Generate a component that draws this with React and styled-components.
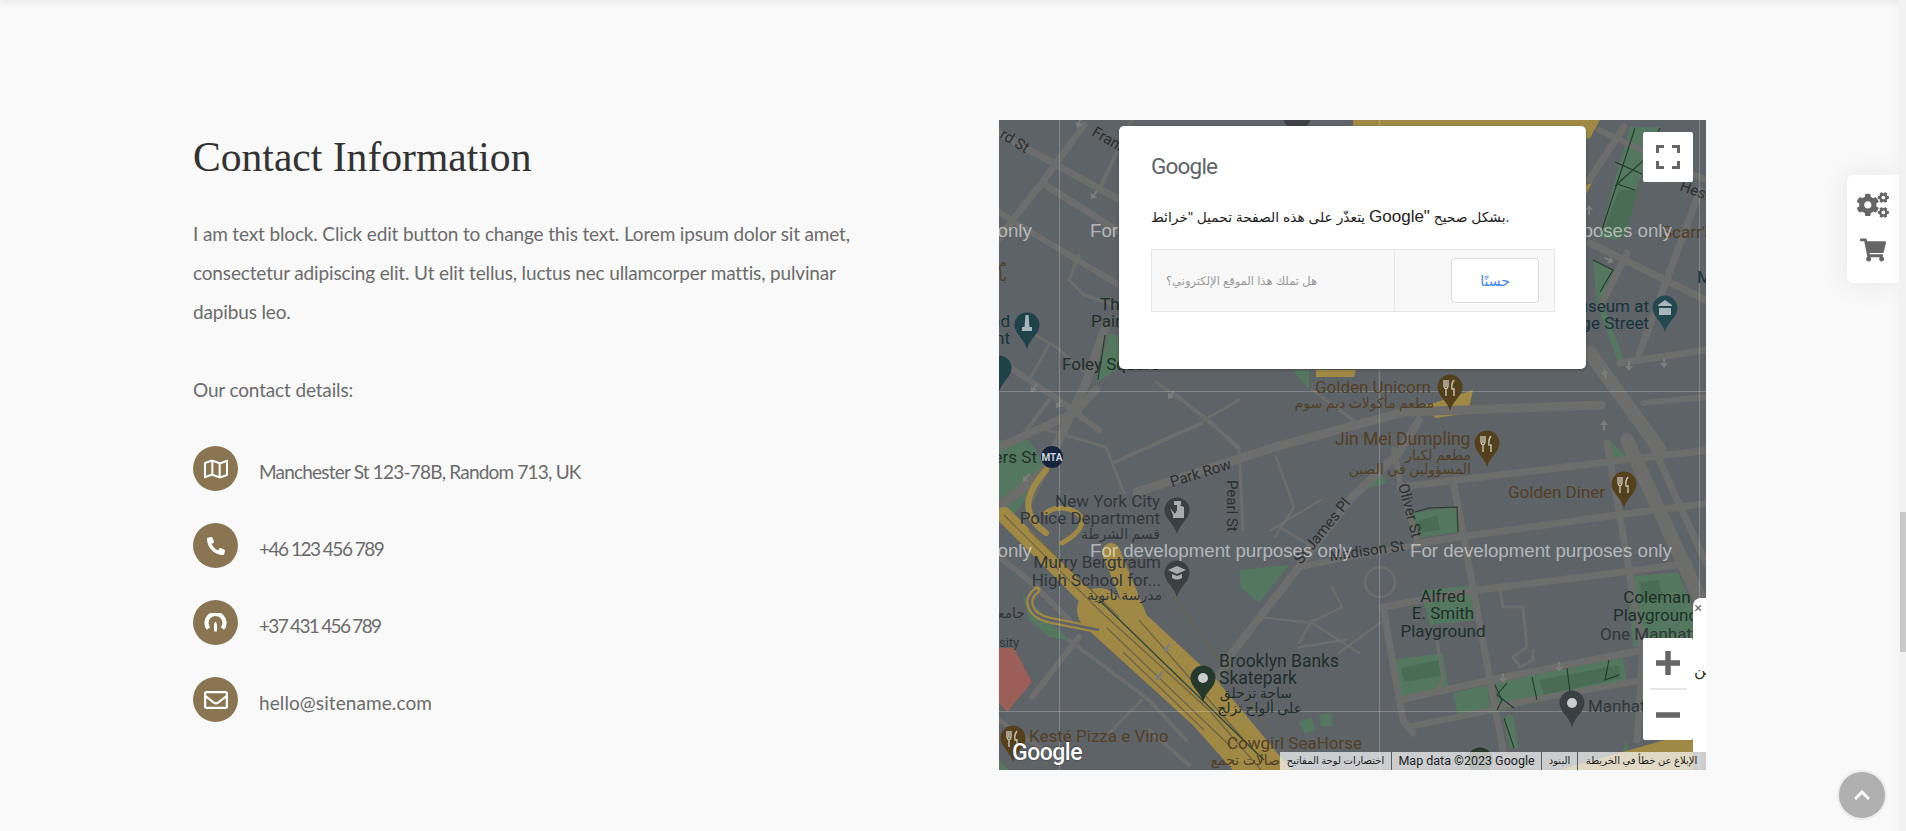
import React from "react";
import styled, { createGlobalStyle } from "styled-components";
import { FaCogs, FaShoppingCart, FaRegMap, FaPhoneAlt, FaRegEnvelope, FaChevronUp } from "react-icons/fa";

const GlobalStyle = createGlobalStyle`
    html, body {
        margin: 0;
        padding: 0;
        height: 100%;
        overflow: hidden;
        background: #f9f9f9;
    }
`;

const ROADS = [
    // top left
    ["M0 13 L130 85", 7], ["M43 63 L130 118", 7], ["M85 5 L45 60 L0 118", 7], ["M133 0 L100 70", 4],
    ["M0 92 L20 105 L120 165", 6], ["M107 205 L87 263 L60 320 L30 380", 9], ["M0 240 L60 280 L100 310", 6],
    ["M20 320 L50 280", 4], ["M50 225 L30 260", 3], ["M33 213 L57 227 L87 253", 3],
    ["M157 262 L210 300 L240 330", 3], ["M205 300 L240 280", 3], ["M97 270 L75 293 L1 327", 8],
    ["M116 342 L203 303", 4], ["M38 307 L107 327 L125 373", 3], ["M175 273 L240 327 L244 410", 3],
    ["M354 300 L313 270", 3], ["M80 135 L70 160 L85 175 L115 185", 3],
    // park row and the streets around it
    ["M138 372 L276 327 L405 292 L602 285", 9],
    ["M205 585 L233 533 L300 447 L353 377 L400 333 L420 300", 8],
    ["M300 447 L351 437 L406 427 L471 415", 6],
    ["M395 330 L401 363 L418 420", 6],
    ["M401 367 L608 342 L711 330", 7], ["M418 423 L618 395 L711 383", 7],
    ["M478 470 L624 452 L690 443", 7], ["M384 487 L478 470", 7],
    ["M401 580 L491 560 L628 533 L644 530", 7], ["M494 587 L644 560", 6], ["M408 607 L494 590", 6],
    ["M454 360 L504 630", 7], ["M608 323 L644 530 L638 620", 7],
    ["M384 487 L404 600 L414 613", 7], ["M628 320 L700 477", 14], ["M651 320 L707 443", 7],
    // right side, past the dialog
    ["M591 123 L707 180", 7], ["M625 7 L590 60", 7], ["M701 70 L638 240", 7], ["M628 133 L601 187", 7],
    ["M621 243 L707 230", 7], ["M591 233 L661 330", 14], ["M644 283 L707 277", 6], ["M600 10 L707 60", 6],
    // left, around the highway
    ["M0 387 L43 353", 10], ["M0 437 L33 463 L70 500", 6], ["M33 577 L80 517", 6],
    ["M70 520 L150 580 L187 620", 4], ["M143 580 L110 613", 3], ["M0 600 L60 640", 4], ["M190 645 L150 610", 4],
    // small ways
    ["M277 337 L295 387 L276 417", 2.5], ["M322 380 L300 393 L272 410", 2.5], ["M281 407 L313 427", 2.5],
    ["M260 497 L313 503 L360 533", 2.5], ["M300 527 L347 520", 2.5], ["M313 500 L300 523", 2.5],
    ["M333 467 L343 487 L313 502", 2.5], ["M340 533 L385 500", 2.5],
    ["M501 470 L504 487 L524 487 L528 527 L514 537 L521 547 L534 540 L534 530", 3],
    ["M438 520 L444 560 L438 570", 3],
];

const PARKS = [
    "240,450 290,445 260,483 242,467", "23,473 70,520 50,517 30,500",
    "414,393 458,387 459,412 418,418", "394,540 444,533 449,567 399,578",
    "454,573 488,565 491,590 459,597", "496,563 624,537 628,563 501,590",
    "628,457 679,452 694,490 694,517 634,527", "423,470 478,465 478,500 430,505",
    "504,597 514,595 519,628 511,628", "611,320 628,337 614,338", "364,370 381,353 388,363",
    "631,7 661,7 638,67 618,120 601,117 614,67", "594,140 614,150 598,187",
    "598,183 604,183 625,240 618,240",
    "110,213 120,217 120,248 97,263", "293,250 310,250 310,270",
    "0,320 30,320 50,350 10,400 0,380", "0,640 10,650 0,650", "627,620 635,650 620,650",
    "300,602 312,597 317,610 306,614", "320,595 332,593 333,606 322,606",
];

const DARK_PARKS = [
    "620,70 640,70 625,118 604,112", "408,405 438,395 441,410 412,414",
    "402,548 440,540 442,556 405,562", "540,560 620,545 622,558 545,575",
    "640,462 660,460 664,480 644,482",
];

const PARK_PATHS = [
    "M636 8 L601 116", "M661 8 L645 40 L616 66", "M616 42 L643 54", "M618 64 L636 70",
    "M594 140 L614 150 L601 172", "M496 565 L503 580 L498 590", "M508 563 L498 575 L515 588",
    "M533 557 L538 580", "M568 548 L572 580", "M610 540 L606 560 L620 555",
    "M416 392 L430 388 L458 387 L459 412", "M106 215 L99 260",
    "M505 598 L515 628",
];

const HIGHWAY_LINES = [
    "M5 395 L100 490 L210 590 L262 650", "M108 508 L230 625", "M124 532 L205 610", "M170 470 L270 610",
    "M140 500 L245 620", "M30 410 L120 497",
];

const ARROWS = [
    [80, 3, 200], [95, 75, 215], [35, 268, 210], [60, 284, 210], [172, 275, 215], [27, 358, 220],
    [168, 528, 215], [160, 556, 215], [590, 90, 0], [610, 140, 120], [630, 246, 180], [665, 243, 180],
    [606, 254, -10], [605, 305, 0], [560, 547, 180], [504, 558, 180],
];

const LABELS = [
    { x: 0, y: 17, t: "rd St", rot: 32, size: 15, tone: "street" },
    { x: 92, y: 15, t: "Frank", rot: 30, size: 15, tone: "street" },
    { x: 101, y: 190, t: "The", tone: "park" },
    { x: 92, y: 207, t: "Paine", tone: "park" },
    { x: 63, y: 250, t: "Foley Square", tone: "park" },
    { x: 11, y: 207, t: "nd", anchor: "end", tone: "museum" },
    { x: 11, y: 224, t: "ent", anchor: "end", tone: "museum" },
    { x: 8, y: 147, t: "م", anchor: "end", size: 14, tone: "food" },
    { x: 8, y: 161, t: "با", anchor: "end", size: 14, tone: "food" },
    { x: 316, y: 273, t: "Golden Unicorn", tone: "food" },
    { x: 435, y: 288, t: "مطعم مأكولات ديم سوم", anchor: "end", size: 14, tone: "food" },
    { x: 336, y: 325, t: "Jin Mei Dumpling", size: 17.5, tone: "food" },
    { x: 472, y: 340, t: "مطعم لكبار", anchor: "end", size: 14, tone: "food" },
    { x: 472, y: 354, t: "المسؤولين في الصين", anchor: "end", size: 14, tone: "food" },
    { x: 509, y: 378, t: "Golden Diner", tone: "food" },
    { x: 173, y: 367, t: "Park Row", rot: -17, size: 15, tone: "street" },
    { x: 228, y: 360, t: "Pearl St", rot: 90, size: 15, tone: "street" },
    { x: 399, y: 365, t: "Oliver St", rot: 75, size: 15, tone: "street" },
    { x: 302, y: 445, t: "St James Pl", rot: -51, size: 15, tone: "street" },
    { x: 331, y: 441, t: "Madison St", rot: -8, size: 15, tone: "street" },
    { x: 38, y: 343, t: "ers St", anchor: "end", tone: "park" },
    { x: 161, y: 387, t: "New York City", anchor: "end", tone: "poi" },
    { x: 161, y: 404, t: "Police Department", anchor: "end", tone: "poi" },
    { x: 161, y: 419, t: "قسم الشرطة", anchor: "end", size: 14, tone: "poi" },
    { x: 162, y: 448, t: "Murry Bergtraum", anchor: "end", tone: "poi" },
    { x: 162, y: 466, t: "High School for...", anchor: "end", tone: "poi" },
    { x: 163, y: 480, t: "مدرسة ثانوية", anchor: "end", size: 14, tone: "poi" },
    { x: 26, y: 498, t: "جامعة", anchor: "end", size: 14, tone: "poi" },
    { x: 0, y: 527, t: "sity", size: 13, tone: "poi" },
    { x: 30, y: 622, t: "Kesté Pizza e Vino", tone: "food" },
    { x: 228, y: 629, t: "Cowgirl SeaHorse", tone: "food" },
    { x: 281, y: 645, t: "صالات تجمع", anchor: "end", size: 14, tone: "food" },
    { x: 220, y: 547, t: "Brooklyn Banks", size: 17.5, tone: "park" },
    { x: 220, y: 564, t: "Skatepark", size: 17.5, tone: "park" },
    { x: 293, y: 578, t: "ساحة تزحلق", anchor: "end", size: 14, tone: "park" },
    { x: 303, y: 593, t: "على ألواح تزلج", anchor: "end", size: 14, tone: "park" },
    { x: 444, y: 482, t: "Alfred", anchor: "middle", tone: "park" },
    { x: 444, y: 499, t: "E. Smith", anchor: "middle", tone: "park" },
    { x: 444, y: 517, t: "Playground", anchor: "middle", tone: "park" },
    { x: 658, y: 483, t: "Coleman", anchor: "middle", tone: "park" },
    { x: 614, y: 501, t: "Playground", tone: "park" },
    { x: 601, y: 520, t: "One Manhattan", tone: "poi" },
    { x: 589, y: 592, t: "Manhattan", tone: "poi" },
    { x: 663, y: 118, t: "Scarr's", tone: "food" },
    { x: 698, y: 163, t: "M", tone: "museum" },
    { x: 680, y: 70, t: "Hester", rot: 20, size: 15, tone: "street" },
    { x: 650, y: 192, t: "Museum at", anchor: "end", tone: "museum" },
    { x: 650, y: 209, t: "Eldridge Street", anchor: "end", tone: "museum" },
];

const PINS = [
    { x: 28, y: 205, color: "#1f4149", glyph: "tower" },
    { x: 0, y: 248, color: "#1f4149" },
    { x: 451, y: 267, color: "#55401c", glyph: "fork" },
    { x: 488, y: 323, color: "#55401c", glyph: "fork" },
    { x: 625, y: 364, color: "#55401c", glyph: "fork" },
    { x: 178, y: 390, color: "#3a3f44", glyph: "badge" },
    { x: 178, y: 453, color: "#3a3f44", glyph: "school" },
    { x: 14, y: 618, color: "#55401c", glyph: "fork" },
    { x: 204, y: 558, color: "#24392b", glyph: "hole" },
    { x: 573, y: 583, color: "#3a3f44", glyph: "hole" },
    { x: 666, y: 188, color: "#234850", glyph: "museum" },
    { x: 481, y: 640, color: "#24392b" },
];

const Page = styled.div`
    position: relative;
    height: 831px;
    overflow: hidden;
    background: #f9f9f9;
    font-family: "Lato", "Liberation Sans", sans-serif;

    &::before {
        content: "";
        position: absolute;
        left: 0;
        right: 0;
        top: -4px;
        height: 4px;
        box-shadow: 0 0 8px rgba(0, 0, 0, 0.16);
    }
`;

const Section = styled.section`
    display: flex;
    padding: 120px 0 0 193px;
`;

const InfoColumn = styled.div`
    width: 806px;
    flex-shrink: 0;
`;

const Heading = styled.h2`
    margin: 13px 0 0;
    font-family: "Liberation Serif", serif;
    font-weight: 400;
    font-size: 41.6px;
    line-height: 48px;
    color: #333;
`;

const Paragraph = styled.p`
    margin: ${(p) => p.$top}px 0 0;
    font-size: 19px;
    line-height: 39px;
    letter-spacing: -0.15px;
    color: #6b6b6b;
`;

const ContactList = styled.ul`
    list-style: none;
    margin: 37px 0 0;
    padding: 0;
    display: flex;
    flex-direction: column;
    gap: 32px;
`;

const ContactRow = styled.li`
    display: flex;
    align-items: center;
    gap: 21px;
    height: 45px;
`;

const IconCircle = styled.span`
    width: 45px;
    height: 45px;
    border-radius: 50%;
    background: #8a7552;
    color: #fff;
    display: flex;
    align-items: center;
    justify-content: center;
    font-size: ${(p) => p.$size || 24}px;
    flex-shrink: 0;
`;

const ContactText = styled.span`
    padding-top: 6px;
    font-size: 19px;
    letter-spacing: ${(p) => p.$spacing}px;
    color: #6b6b6b;
`;

const MapFrame = styled.div`
    position: relative;
    width: 707px;
    height: 650px;
    overflow: hidden;
    flex-shrink: 0;
    background: #5e6368;
`;

const MapDrawing = styled.svg`
    display: block;
`;

const toneColors = {
    street: "#2c2e30",
    poi: "#32363a",
    park: "#1f2f28",
    food: "#523f25",
    museum: "#17333a",
};

const MapLabel = styled.text`
    font-family: "Roboto", "DejaVu Sans", sans-serif;
    font-size: ${(p) => p.$size || 17}px;
    fill: ${(p) => toneColors[p.$tone]};
`;

const MtaLabel = styled.text`
    font-family: "Roboto", sans-serif;
    font-size: 10px;
    font-weight: 700;
    fill: #cfd3da;
`;

const Watermark = styled.text`
    font-family: "Liberation Sans", sans-serif;
    font-size: 18.7px;
    fill: rgba(255, 255, 255, 0.55);
`;

const Dialog = styled.div`
    position: absolute;
    left: 120px;
    top: 6px;
    width: 467px;
    height: 243px;
    box-sizing: border-box;
    padding: 25px 31px 0 32px;
    background: #fff;
    border-radius: 5px;
    box-shadow: 0 1px 3px rgba(0, 0, 0, 0.3);
`;

const DialogLogo = styled.div`
    font-family: "Roboto", sans-serif;
    font-size: 22.5px;
    line-height: 30px;
    letter-spacing: -0.8px;
    color: #5f6368;
`;

const DialogMessage = styled.p`
    margin: 24px 0 0;
    font-family: "Liberation Sans", "DejaVu Sans", sans-serif;
    font-size: 13.8px;
    line-height: 24px;
    color: #222;
    white-space: nowrap;
`;

const LatinWord = styled.span`
    font-size: 17px;
`;

const DialogFooter = styled.div`
    display: flex;
    margin-top: 19px;
    height: 63px;
    box-sizing: border-box;
    background: #f8f8f8;
    border: 1px solid #e6e6e6;
`;

const OwnerCell = styled.div`
    width: 243px;
    box-sizing: border-box;
    display: flex;
    align-items: center;
    justify-content: flex-end;
    padding-left: 14px;
    border-right: 1px solid #e6e6e6;
    font-family: "Liberation Sans", "DejaVu Sans", sans-serif;
    font-size: 11.5px;
    color: #999;
    white-space: nowrap;
`;

const ButtonCell = styled.div`
    flex: 1;
    display: flex;
    align-items: center;
    justify-content: flex-end;
    padding-right: 15px;
`;

const OkButton = styled.button`
    width: 88px;
    height: 45px;
    background: #fff;
    border: 1px solid #dadce0;
    border-radius: 4px;
    font-family: "Liberation Sans", "DejaVu Sans", sans-serif;
    font-size: 14px;
    color: #4285f4;
`;

const MapButton = styled.div`
    position: absolute;
    right: 13px;
    top: ${(p) => p.$top}px;
    width: 50px;
    height: ${(p) => p.$height}px;
    background: #fff;
    border-radius: 2px;
    color: #666;
    display: flex;
    flex-direction: column;
    align-items: center;
    justify-content: center;
`;

const ZoomSign = styled.svg`
    display: block;
`;

const ZoomHalf = styled.div`
    flex: 1;
    display: flex;
    align-items: center;
    justify-content: center;
`;

const ZoomDivider = styled.div`
    width: 37px;
    height: 2px;
    background: #e6e6e6;
`;

const ClippedTooltip = styled.div`
    position: absolute;
    right: 0;
    top: 478px;
    width: 13px;
    height: 154px;
    background: #fff;
    border-radius: 8px 0 0 0;
    overflow: hidden;
    color: #333;
    font-family: "Liberation Sans", "DejaVu Sans", sans-serif;
`;

const TooltipClose = styled.span`
    position: absolute;
    left: 1px;
    top: 1px;
    font-size: 14px;
    line-height: 18px;
    color: #555;
`;

const TooltipWord = styled.span`
    position: absolute;
    left: 1px;
    top: 60px;
    font-size: 16px;
    line-height: 24px;
    white-space: nowrap;
`;

const GoogleMark = styled.div`
    position: absolute;
    left: 13px;
    bottom: 3px;
    font-family: "Roboto", sans-serif;
    font-weight: 500;
    font-size: 23px;
    line-height: 28px;
    letter-spacing: -0.5px;
    color: #fff;
    text-shadow: 0 0 2px rgba(0, 0, 0, 0.6);
`;

const Attribution = styled.div`
    position: absolute;
    left: 281px;
    right: 0;
    bottom: 0;
    height: 18px;
    display: flex;
    background: rgba(255, 255, 255, 0.68);
    color: #222;
    font-family: "Roboto", "DejaVu Sans", sans-serif;
    font-size: 10px;
    line-height: 18px;
    white-space: nowrap;
`;

const AttributionPart = styled.span`
    width: ${(p) => p.$width}px;
    flex-shrink: 0;
    box-sizing: border-box;
    text-align: center;
    border-right: 1px solid ${(p) => (p.$last ? "transparent" : "#5a5a5a")};
    font-size: ${(p) => p.$size || 10}px;
`;

const SidePanel = styled.aside`
    position: absolute;
    right: 7px;
    top: 175px;
    width: 52px;
    height: 108px;
    background: #fff;
    border-radius: 6px 0 0 6px;
    box-shadow: 0 0 30px rgba(0, 0, 0, 0.08);
    display: flex;
    flex-direction: column;
    align-items: center;
    gap: 16px;
    padding-top: 14px;
    box-sizing: border-box;
    color: #666;
`;

const ScrollTrack = styled.div`
    position: absolute;
    right: 0;
    top: 0;
    bottom: 0;
    width: 7px;
    background: #f2f2f2;
    box-shadow: -4px 0 8px rgba(0, 0, 0, 0.02);
`;

const ScrollThumb = styled.div`
    position: absolute;
    right: 0;
    top: 512px;
    width: 6px;
    height: 140px;
    background: #c9c9c9;
`;

const ToTop = styled.button`
    position: absolute;
    left: 1837px;
    top: 770px;
    width: 46px;
    height: 46px;
    box-sizing: content-box;
    padding: 0;
    border: 2px solid #ececec;
    border-radius: 50%;
    background: #b0b0b0;
    color: #fff;
    display: flex;
    align-items: center;
    justify-content: center;
    font-size: 18px;
`;

function Pin({ x, y, color, glyph }) {
    return (
        <g transform={`translate(${x} ${y})`}>
            <path d="M-12.5 0 A12.5 12.5 0 1 1 12.5 0 C12.5 9 3 13 0 24 C-3 13 -12.5 9 -12.5 0 Z" fill={color} />
            {glyph === "hole" && <circle r="5" fill="#c9cbcc" />}
            {glyph === "fork" && (
                <path d="M-6 -7 V-1 Q-6 1 -4 2 V9 M-4 -7 V0 M-2 -7 V-1 Q-2 1 -4 2 M4 -7 Q1 -3 2 2 L4 2 V9" stroke="#c9c3b5" strokeWidth="1.4" fill="none" />
            )}
            {glyph === "tower" && <path d="M-1.5 -10 H1.5 L2.5 2 H5 V6 H-5 V2 H-2.5 Z" fill="#a9b6b9" />}
            {glyph === "badge" && <path d="M-7 -2 L-2 4 L0 0 V-5 H-3 V-9 H4 V-5 H2 L7 -3 V8 H-4 V5 Z" fill="#a9acaf" />}
            {glyph === "school" && <path d="M-9 -3 L0 -7 L9 -3 L0 1 Z M-5 1 L0 3 L5 1 V5 Q0 8 -5 5 Z" fill="#a9acaf" />}
            {glyph === "museum" && <path d="M-7 -3 L0 -8 L7 -3 V-2 H-7 Z M-6 0 H6 V7 H-6 Z" fill="#a9b6b9" />}
        </g>
    );
}

function MapImage() {
    return (
        <MapDrawing width="707" height="650" viewBox="0 0 707 650">
            <rect width="707" height="650" fill="#5e6368" />
            {/* block colours first, streets go over them */}
            <polygon points="0,528 15,528 33,562 8,592 0,583" fill="#9c5f57" />
            {PARKS.map((p) => <polygon key={p} points={p} fill="#54785f" />)}
            {DARK_PARKS.map((p) => <polygon key={p} points={p} fill="#4a6c54" />)}
            <polygon points="354,0 600,0 596,6 354,6" fill="#9f8945" />
            <polygon points="581,0 601,0 591,18 581,20" fill="#9f8945" />
            <polygon points="581,67 593,63 584,80" fill="#9f8945" />
            <polygon points="317,250 357,250 355,257 317,257" fill="#9f8945" />
            <polygon points="423,287 474,270 469,293 437,298" fill="#9f8945" />
            <polygon points="560,650 694,612 694,650" fill="#9f8945" />
            <circle cx="298" cy="-4" r="14" fill="#3f4144" />

            <g fill="none" stroke="#6d6d6b" strokeLinecap="round" strokeLinejoin="round">
                {ROADS.map(([d, w]) => <path key={d} d={d} strokeWidth={w} />)}
                <circle cx="381" cy="462" r="15" strokeWidth="2.5" />
            </g>

            {/* expressway */}
            <g fill="none" stroke="#9f8945" strokeLinecap="round" strokeLinejoin="round">
                <path d="M5 395 L100 490" strokeWidth="16" />
                <path d="M100 490 L210 590 L272 660" strokeWidth="44" />
                <path d="M112 432 L140 500 L210 565 L285 655" strokeWidth="18" />
                <path d="M47 350 C25 375 22 395 47 413" strokeWidth="6" />
                <path d="M47 393 C62 382 85 392 83 402 C82 410 72 418 63 423" strokeWidth="5" />
                <path d="M38 470 C25 480 30 495 50 500 L100 510" strokeWidth="7" />
            </g>
            <path d="M38 470 C25 480 30 495 50 500 L100 510" fill="none" stroke="#5e6368" strokeWidth="2.5" />
            <g fill="none" stroke="#6f6347" strokeWidth="1.2">
                {HIGHWAY_LINES.map((d) => <path key={d} d={d} />)}
            </g>
            <path d="M100 480 L265 640" fill="none" stroke="#2f4a3a" strokeWidth="1.4" />

            <g fill="none" stroke="#213b2a" strokeWidth="1.1">
                {PARK_PATHS.map((d) => <path key={d} d={d} />)}
            </g>

            <g fill="#7d7d7b">
                {ARROWS.map(([x, y, r]) => (
                    <path key={`${x}-${y}`} transform={`translate(${x} ${y}) rotate(${r})`} d="M0 -5 L4 0 H1 V5 H-1 V0 H-4 Z" />
                ))}
            </g>

            {/* seams between the map tiles */}
            <g stroke="rgba(255,255,255,0.22)" strokeWidth="1">
                <line x1="60.5" y1="0" x2="60.5" y2="650" />
                <line x1="380.5" y1="0" x2="380.5" y2="650" />
                <line x1="700.5" y1="0" x2="700.5" y2="650" />
                <line x1="0" y1="271.5" x2="707" y2="271.5" />
                <line x1="0" y1="591.5" x2="707" y2="591.5" />
            </g>

            {PINS.map((p) => <Pin key={`${p.x}-${p.y}`} {...p} />)}
            <circle cx="53" cy="337" r="11" fill="#16233f" />
            <MtaLabel x="53" y="341" textAnchor="middle">MTA</MtaLabel>

            {LABELS.map((l) => (
                <MapLabel
                    key={`${l.t}-${l.x}-${l.y}`}
                    x={l.x}
                    y={l.y}
                    textAnchor={l.anchor || "start"}
                    transform={l.rot ? `rotate(${l.rot} ${l.x} ${l.y})` : undefined}
                    $size={l.size}
                    $tone={l.tone}
                >
                    {l.t}
                </MapLabel>
            ))}

            {[117, 437].map((y) => [-229, 91, 411].map((x) => (
                <Watermark key={`${x}-${y}`} x={x} y={y}>For development purposes only</Watermark>
            )))}
        </MapDrawing>
    );
}

function HeadsetIcon() {
    return (
        <svg width="23" height="19" viewBox="0 0 23 19">
            <path d="M4.5 15.5 A9 9 0 1 1 18.5 15.5" fill="none" stroke="#fff" strokeWidth="4.2" />
            <path d="M11.5 8.5 C13 10.5 13.4 12 12.8 18.5 H10.2 C9.6 12 10 10.5 11.5 8.5 Z" fill="#fff" />
        </svg>
    );
}

export default function App() {
    return (
        <Page>
            <GlobalStyle />
            <Section>
                <InfoColumn>
                    <Heading>Contact Information</Heading>
                    <Paragraph $top={33}>
                        I am text block. Click edit button to change this text. Lorem ipsum dolor sit amet,<br />
                        consectetur adipiscing elit. Ut elit tellus, luctus nec ullamcorper mattis, pulvinar<br />
                        dapibus leo.
                    </Paragraph>
                    <Paragraph $top={39}>Our contact details:</Paragraph>
                    <ContactList>
                        <ContactRow>
                            <IconCircle><FaRegMap /></IconCircle>
                            <ContactText $spacing={-0.8}>Manchester St 123-78B, Random 713, UK</ContactText>
                        </ContactRow>
                        <ContactRow>
                            <IconCircle $size={18}><FaPhoneAlt /></IconCircle>
                            <ContactText $spacing={-1.5}>+46 123 456 789</ContactText>
                        </ContactRow>
                        <ContactRow>
                            <IconCircle><HeadsetIcon /></IconCircle>
                            <ContactText $spacing={-1.7}>+37 431 456 789</ContactText>
                        </ContactRow>
                        <ContactRow>
                            <IconCircle><FaRegEnvelope /></IconCircle>
                            <ContactText $spacing={0.09}>hello@sitename.com</ContactText>
                        </ContactRow>
                    </ContactList>
                </InfoColumn>
                <MapFrame>
                    <MapImage />
                    <Dialog>
                        <DialogLogo>Google</DialogLogo>
                        <DialogMessage dir="ltr">يتعذّر على هذه الصفحة تحميل "خرائط <LatinWord>Google"</LatinWord> بشكل صحيح.</DialogMessage>
                        <DialogFooter>
                            <OwnerCell dir="rtl">هل تملك هذا الموقع الإلكتروني؟</OwnerCell>
                            <ButtonCell><OkButton>حسنًا</OkButton></ButtonCell>
                        </DialogFooter>
                    </Dialog>
                    <MapButton $top={12} $height={50}>
                        <svg width="24" height="24" viewBox="0 0 24 24">
                            <path d="M1.5 8 V1.5 H8 M16 1.5 H22.5 V8 M22.5 16 V22.5 H16 M8 22.5 H1.5 V16" fill="none" stroke="#666" strokeWidth="3" />
                        </svg>
                    </MapButton>
                    <ClippedTooltip>
                        <TooltipClose>×</TooltipClose>
                        <TooltipWord dir="rtl">تن</TooltipWord>
                    </ClippedTooltip>
                    <MapButton $top={518} $height={102}>
                        <ZoomHalf>
                            <ZoomSign width="24" height="24" viewBox="0 0 24 24">
                                <path d="M0 12 H24 M12 0 V24" stroke="#666" strokeWidth="5.5" />
                            </ZoomSign>
                        </ZoomHalf>
                        <ZoomDivider />
                        <ZoomHalf>
                            <ZoomSign width="24" height="24" viewBox="0 0 24 24">
                                <path d="M0 12 H24" stroke="#666" strokeWidth="5.5" />
                            </ZoomSign>
                        </ZoomHalf>
                    </MapButton>
                    <GoogleMark>Google</GoogleMark>
                    <Attribution>
                        <AttributionPart $width={112}>اختصارات لوحة المفاتيح</AttributionPart>
                        <AttributionPart $width={150} $size={12.5}>Map data ©2023 Google</AttributionPart>
                        <AttributionPart $width={36}>البنود</AttributionPart>
                        <AttributionPart $width={128} $last>الإبلاغ عن خطأ في الخريطة</AttributionPart>
                    </Attribution>
                </MapFrame>
            </Section>
            <SidePanel>
                <FaCogs size={32} />
                <FaShoppingCart size={26} />
            </SidePanel>
            <ScrollTrack />
            <ScrollThumb />
            <ToTop><FaChevronUp /></ToTop>
        </Page>
    );
}
